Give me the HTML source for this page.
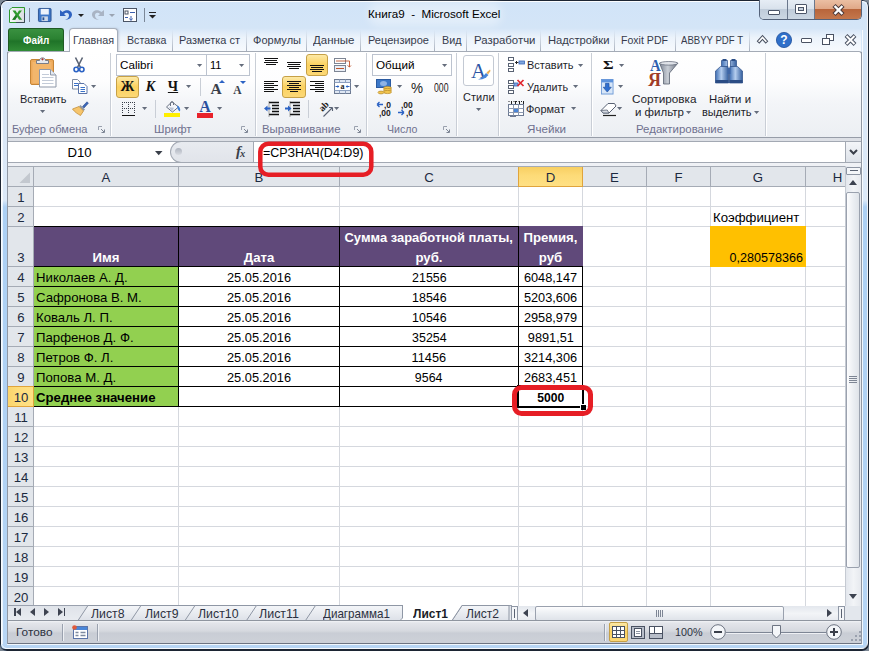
<!DOCTYPE html>
<html lang="ru"><head><meta charset="utf-8"><title>Книга9 - Microsoft Excel</title>
<style>
*{box-sizing:border-box;margin:0;padding:0}
html,body{width:869px;height:651px;overflow:hidden;background:#7d8894}
body{font-family:"Liberation Sans","DejaVu Sans",sans-serif;font-size:12px;color:#1e1e2a;position:relative}
.a{position:absolute}
.t{position:absolute;white-space:nowrap;line-height:16px;height:16px;font-size:11.5px}
.c{text-align:center}
.r{text-align:right}
.b{font-weight:bold}
#win{position:absolute;left:0;top:0;width:869px;height:651px;box-shadow:inset 1px 1px 0 0 #1c2533,inset -1.500px -2px 0 0 #1c2533;border-radius:7px 7px 7px 7px;
 background:linear-gradient(180deg,#d1e4f8 0px,#d4e5f7 28px,#dbe8f7 140px,#dce9f8 200px,#acd0f4 207px,#b2d3f4 520px,#b8d6f5 651px);overflow:hidden}
#win:before{content:"";position:absolute;left:1px;top:1px;right:1.500px;bottom:2px;border:1px solid rgba(255,255,255,.9);border-radius:6px}
.cell{position:absolute;font-size:13.2px;line-height:20px;height:20px;white-space:nowrap;color:#000}
.hd{position:absolute;font-size:13.2px;line-height:20px;height:20px;white-space:nowrap;color:#1c2a40;text-align:center}
.gl{position:absolute;font-size:11.5px;line-height:14px;height:14px;white-space:nowrap;color:#6f708f;text-align:center}
.sep{position:absolute;width:2px;top:53px;height:83px;background:linear-gradient(90deg,#c9ced6 0 1px,#fff 1px 2px)}
.arr{position:absolute;width:0;height:0;border-left:3px solid transparent;border-right:3px solid transparent;border-top:3px solid #656d7c}
.tab{position:absolute;top:32px;height:16px;line-height:16px;font-size:11.5px;color:#363b4c;white-space:nowrap}
.tsep{position:absolute;top:30px;width:1px;height:21px;background:linear-gradient(180deg,rgba(160,170,185,0),#a9b2c0)}
.hl{position:absolute;background:linear-gradient(180deg,#fde9a6,#fbd15f 50%,#fcd877);border:1px solid #c6a046;border-radius:3px}
svg{position:absolute;overflow:visible}
</style></head><body>
<div id="win">
<div class="a" style="left:375px;top:9px;width:120px;height:10px;background:rgba(255,255,255,.35);box-shadow:0 0 9px 7px rgba(255,255,255,.35);border-radius:5px"></div>
<div class="t" style="transform:scaleX(1.0124);transform-origin:0 50%;left:368.400px;top:6px;font-size:11.500px;color:#000;white-space:pre">Книга9  -  Microsoft Excel</div>
<div class="a" style="left:759px;top:0;width:103px;height:20px;border:1px solid #55637a;border-top:none;border-radius:0 0 5px 5px;overflow:hidden;background:#c6d3e2">
<div class="a" style="left:0;top:0;width:28px;height:19px;background:linear-gradient(180deg,#e6edf5 0,#d9e2ec 45%,#c0ccda 50%,#ccd7e3 100%);border-right:1px solid #6a778c"></div>
<div class="a" style="left:28px;top:0;width:27px;height:19px;background:linear-gradient(180deg,#e6edf5 0,#d9e2ec 45%,#c0ccda 50%,#ccd7e3 100%);border-right:1px solid #6a778c"></div>
<div class="a" style="left:55px;top:0;width:47px;height:19px;background:linear-gradient(180deg,#ebbfa3 0,#e0a888 45%,#b8653b 50%,#c4774c 100%)"></div>
<div class="a" style="left:8px;top:10px;width:12px;height:5px;border:1px solid #4c5568;background:#fff;border-radius:1px"></div>
<div class="a" style="left:35px;top:4px;width:12px;height:10px;border:1px solid #4c5568;background:#fff;border-radius:1px"></div>
<div class="a" style="left:38px;top:7px;width:6px;height:4px;border:1px solid #4c5568;background:#c6d0dc"></div>
<svg style="left:72px;top:4px" width="13" height="12" viewBox="0 0 13 12"><path d="M2 1.500L11 10.500M11 1.500L2 10.500" fill="none" stroke="#4b3a3a" stroke-width="4.400"/><path d="M2.600 2L10.400 10M10.400 2L2.600 10" fill="none" stroke="#fff" stroke-width="2.400"/></svg>
</div>
<svg style="left:9px;top:7px" width="16" height="16" viewBox="0 0 16 16"><defs><linearGradient id="xg" x1="0" x2="1"><stop offset="0" stop-color="#f7f8f9"/><stop offset="1" stop-color="#d9dde2"/></linearGradient></defs>
<path d="M3 .500h12.500v15H.500V3z" fill="url(#xg)" stroke="#2f9a2f"/><path d="M7 15.500h8.500V6" fill="none" stroke="#3c4a55"/>
<path d="M3.500 3.500h3L8.200 6.300 10 3.500h3L9.600 8l3.600 4.800h-3.100L8.100 9.700 6.200 12.800h-3L6.700 8z" fill="#2f9a2f"/><path d="M8.100 9.700L6.200 12.800h-3L6.700 8z" fill="#1f7a25"/></svg>
<div class="a" style="left:29px;top:8px;width:1px;height:14px;background:#7b8797"></div>
<svg style="left:37.500px;top:8px" width="13.500" height="14" viewBox="0 0 15 15" preserveAspectRatio="none"><rect x=".5" y=".5" width="14" height="14" rx="1" fill="#3f78c8" stroke="#27508f"/><rect x="3" y="1" width="9" height="6" fill="#eef3fb"/><rect x="4" y="9" width="7" height="5" fill="#cfd9e8"/><rect x="5" y="10" width="2" height="3" fill="#27508f"/></svg>
<svg style="left:59px;top:8px" width="14" height="14" viewBox="0 0 14 14"><path d="M1 2v6h6L5 6c2-2 5-1.500 5 1.500 0 2-1.500 3.500-4 4.500 5-.5 7-3 7-5.500 0-4-5.500-6-9.500-2.500z" fill="#2f63c0"/></svg>
<div class="arr" style="left:77.500px;top:14px;border-top-color:#222;border-left-width:3px;border-right-width:3px"></div>
<svg style="left:91px;top:8px" width="14" height="14" viewBox="0 0 14 14"><path d="M13 2v6H7l2-2C7 4 4 4.500 4 7.500c0 2 1.500 3.500 4 4.500-5-.5-7-3-7-5.500 0-4 5.500-6 9.500-2.500z" fill="#a9b4c4"/></svg>
<div class="arr" style="left:108.500px;top:14px;border-top-color:#9aa4b2;border-left-width:3px;border-right-width:3px"></div>
<svg style="left:123px;top:8px" width="14" height="14" viewBox="0 0 14 14"><rect x=".5" y=".5" width="13" height="13" fill="#fff" stroke="#4b5566"/><rect x="2" y="3" width="3" height="3" fill="none" stroke="#4b5566"/><path d="M7 4.500h5M2 9.500h3M8 8v4M6.500 10.500L8 12.500 9.500 10.500" stroke="#3b5fae" fill="none"/></svg>
<div class="a" style="left:144px;top:8px;width:1px;height:14px;background:#7b8797"></div>
<div class="a" style="left:149px;top:12px;width:7px;height:1px;background:#222"></div>
<svg style="left:149px;top:15px" width="7" height="3.500" viewBox="0 0 7 3.500"><path d="M0 0h7L3.500 3.500z" fill="#222"/></svg>
<div class="a" style="left:8px;top:28px;width:853px;height:24px;background:linear-gradient(180deg,rgba(255,255,255,0) 0,rgba(255,255,255,.55) 40%,rgba(250,252,254,.92) 100%)"></div>
<div class="a" style="left:8px;top:28px;width:56px;height:23px;border:1px solid #1f5a24;border-bottom:none;border-radius:3px 3px 0 0;background:linear-gradient(180deg,#3a9140 0,#2b8232 45%,#1f7328 55%,#318c36 100%)"></div>
<div class="t b" style="transform:scaleX(0.8597);transform-origin:0 50%;left:22.800px;top:32px;color:#fff;font-size:11.500px;font-weight:bold">Файл</div>
<div class="a" style="left:69px;top:28px;width:49px;height:24px;border:1px solid #a7afbb;border-bottom:none;border-radius:4px 4px 0 0;background:#fff;box-shadow:1px 0 2px rgba(120,130,150,.35)"></div>
<div class="tab" style="transform:scaleX(0.9365);transform-origin:0 50%;left:72.5px">Главная</div>
<div class="tab" style="transform:scaleX(0.9240);transform-origin:0 50%;left:126.5px">Вставка</div>
<div class="tab" style="transform:scaleX(0.9543);transform-origin:0 50%;left:179px">Разметка ст</div>
<div class="tab" style="transform:scaleX(0.9591);transform-origin:0 50%;left:252.5px">Формулы</div>
<div class="tab" style="transform:scaleX(0.9985);transform-origin:0 50%;left:313px">Данные</div>
<div class="tab" style="transform:scaleX(0.9583);transform-origin:0 50%;left:367.5px">Рецензирое</div>
<div class="tab" style="transform:scaleX(0.9369);transform-origin:0 50%;left:441.5px">Вид</div>
<div class="tab" style="transform:scaleX(0.9912);transform-origin:0 50%;left:473.5px">Разработчи</div>
<div class="tab" style="transform:scaleX(0.9745);transform-origin:0 50%;left:547.5px">Надстройки</div>
<div class="tab" style="transform:scaleX(0.9193);transform-origin:0 50%;left:621px">Foxit PDF</div>
<div class="tab" style="transform:scaleX(0.8338);transform-origin:0 50%;left:681px">ABBYY PDF T</div>
<div class="tsep" style="left:172px"></div>
<div class="tsep" style="left:246px"></div>
<div class="tsep" style="left:306px"></div>
<div class="tsep" style="left:360px"></div>
<div class="tsep" style="left:434px"></div>
<div class="tsep" style="left:466px"></div>
<div class="tsep" style="left:540px"></div>
<div class="tsep" style="left:614px"></div>
<div class="tsep" style="left:675px"></div>
<div class="tsep" style="left:749px"></div>
<svg style="left:756px;top:34px" width="13" height="11" viewBox="0 0 13 11"><path d="M2 8.500L6.500 3.500 11 8.500" fill="none" stroke="#4a5262" stroke-width="3.600" stroke-linejoin="miter"/><path d="M2.600 7.800L6.500 3.500 10.400 7.800" fill="none" stroke="#fff" stroke-width="1.600"/></svg>
<svg style="left:776px;top:32px" width="16" height="16" viewBox="0 0 16 16"><circle cx="8" cy="8" r="7.600" fill="#2f6fc9" stroke="#1e4f9c" stroke-width=".8"/><text x="8" y="12.300" text-anchor="middle" font-family="Liberation Sans,sans-serif" font-weight="bold" font-size="12" fill="#fff">?</text></svg>
<div class="a" style="left:801px;top:38px;width:11px;height:5px;border:1px solid #4a5262;background:#fff;border-radius:1px"></div>
<div class="a" style="left:826px;top:34px;width:8px;height:7px;border:1.500px solid #4a5262;background:#fff"></div>
<div class="a" style="left:822px;top:38px;width:8px;height:7px;border:1.500px solid #4a5262;background:#fff"></div>
<svg style="left:844px;top:34px" width="13" height="12" viewBox="0 0 13 12"><path d="M2 1.500L11 10.500M11 1.500L2 10.500" fill="none" stroke="#4a5262" stroke-width="4"/><path d="M2.500 2L10.500 10M10.500 2L2.500 10" fill="none" stroke="#fff" stroke-width="2"/></svg>
<div class="a" style="left:7px;top:51px;width:855px;height:87px;border:1px solid #a4abb6;border-bottom-color:#979da8;border-radius:3px 3px 0 0;background:linear-gradient(180deg,#fff 0,#fdfdfe 35%,#f3f5f8 60%,#eceff3 100%)"></div>
<div class="a" style="left:70px;top:51px;width:47px;height:1px;background:#fff"></div>
<div class="a" style="left:8px;top:138px;width:853px;height:3px;background:#dde0e6"></div>
<div class="sep" style="left:110px"></div>
<div class="sep" style="left:255px"></div>
<div class="sep" style="left:366px"></div>
<div class="sep" style="left:455.5px"></div>
<div class="sep" style="left:498px"></div>
<div class="sep" style="left:591px"></div>
<div class="sep" style="left:765px"></div>
<div class="gl" style="transform:scaleX(0.9660);transform-origin:0 50%;left:11.5px;top:122px;text-align:left">Буфер обмена</div>
<div class="gl" style="transform:scaleX(0.9909);transform-origin:0 50%;left:154px;top:122px;text-align:left">Шрифт</div>
<div class="gl" style="transform:scaleX(0.9915);transform-origin:0 50%;left:262px;top:122px;text-align:left">Выравнивание</div>
<div class="gl" style="transform:scaleX(0.9221);transform-origin:0 50%;left:387px;top:122px;text-align:left">Число</div>
<div class="gl" style="transform:scaleX(1.0109);transform-origin:0 50%;left:526.5px;top:122px;text-align:left">Ячейки</div>
<div class="gl" style="transform:scaleX(0.9930);transform-origin:0 50%;left:636px;top:122px;text-align:left">Редактирование</div>
<svg style="left:98px;top:126px" width="7" height="7" viewBox="0 0 7 7"><path d="M.500 4V.500H4" fill="none" stroke="#9aa1ae"/><path d="M3 3l3 3M6.500 3.500v3H3.500" fill="none" stroke="#7d8594"/></svg>
<svg style="left:241px;top:126px" width="7" height="7" viewBox="0 0 7 7"><path d="M.500 4V.500H4" fill="none" stroke="#9aa1ae"/><path d="M3 3l3 3M6.500 3.500v3H3.500" fill="none" stroke="#7d8594"/></svg>
<svg style="left:354px;top:126px" width="7" height="7" viewBox="0 0 7 7"><path d="M.500 4V.500H4" fill="none" stroke="#9aa1ae"/><path d="M3 3l3 3M6.500 3.500v3H3.500" fill="none" stroke="#7d8594"/></svg>
<svg style="left:443px;top:126px" width="7" height="7" viewBox="0 0 7 7"><path d="M.500 4V.500H4" fill="none" stroke="#9aa1ae"/><path d="M3 3l3 3M6.500 3.500v3H3.500" fill="none" stroke="#7d8594"/></svg>
<svg style="left:29px;top:56px" width="28" height="32" viewBox="0 0 28 32">
<rect x="1.500" y="3.500" width="23" height="25" rx="1.500" fill="#eeaa5a" stroke="#c58537"/>
<rect x="3.500" y="6" width="19" height="21" fill="#f6c07c" opacity=".55"/>
<path d="M7.500 7.500V4.500h3c0-3.500 6-3.500 6 0h3v3z" fill="#e6e9ee" stroke="#6d7482" stroke-width=".9"/>
<circle cx="13.500" cy="3.300" r="1.100" fill="#a33"/>
<path d="M10.500 13.500h11l5.500 5.500v12h-16.500z" fill="#fff" stroke="#8d97a8"/>
<path d="M21.500 13.500v5.500h5.500" fill="#e4e9f1" stroke="#8d97a8"/>
<path d="M13 18.500h7M13 21.500h11.500M13 24.500h11.500M13 27.500h11.500" stroke="#c3cbd8"/>
</svg>
<div class="t" style="transform:scaleX(0.9538);transform-origin:0 50%;left:19.5px;top:91px;">Вставить</div>
<svg style="left:39.9px;top:109.5px" width="5.200" height="3" viewBox="0 0 5.200 3"><path d="M0 0h5.200L2.600 3z" fill="#656d7c"/></svg>
<svg style="left:73px;top:57px" width="12" height="16" viewBox="0 0 12 16">
<path d="M2.500 .500L7.500 10.500M9.500 .500L4.500 10.500" stroke="#596273" stroke-width="1.600" fill="none"/>
<circle cx="3.200" cy="12.500" r="2.200" fill="#fff" stroke="#2b62c4" stroke-width="1.600"/>
<circle cx="8.800" cy="12.500" r="2.200" fill="#fff" stroke="#2b62c4" stroke-width="1.600"/></svg>
<svg style="left:72px;top:79px" width="16" height="15" viewBox="0 0 16 15">
<path d="M.500 .500h5l2.500 2.500v7H.500z" fill="#fff" stroke="#7d8aa0"/><path d="M2 4.500h4M2 6.500h4" stroke="#3b72c8"/>
<path d="M6.500 4.500h5.500l3 3v7H6.500z" fill="#fff" stroke="#5b74a8"/><path d="M8.500 8.500h4.500M8.500 10.500h4.500M8.500 12.500h4.500" stroke="#3b72c8"/></svg>
<svg style="left:91.4px;top:84.5px" width="5.200" height="3" viewBox="0 0 5.200 3"><path d="M0 0h5.200L2.600 3z" fill="#656d7c"/></svg>
<svg style="left:72px;top:101px" width="17" height="15" viewBox="0 0 17 15">
<path d="M10.500 5.500L15 .800l1.400 1.400-4.400 4.800z" fill="#3a66b8" stroke="#2a4a8c" stroke-width=".6"/>
<path d="M8.500 4L13 8.500l-1.500 1.500L7 5.500z" fill="#8d95a3"/>
<path d="M7 5.500l4.500 4.500-3 4.500C6 13 3 11.500 .500 8z" fill="#f6c56c" stroke="#c48f3a" stroke-width=".8"/></svg>
<div class="a" style="left:116px;top:54px;width:91px;height:22px;background:#fff;border:1px solid #bcc3cf"></div>
<div class="a" style="left:206px;top:54px;width:44px;height:22px;background:#fff;border:1px solid #bcc3cf"></div>
<div class="t" style="transform:scaleX(1.0125);transform-origin:0 50%;left:119.5px;top:57px;color:#000">Calibri</div>
<svg style="left:196.9px;top:63.5px" width="5.200" height="3" viewBox="0 0 5.200 3"><path d="M0 0h5.200L2.600 3z" fill="#656d7c"/></svg>
<div class="t" style="transform:scaleX(0.9621);transform-origin:0 50%;left:210px;top:57px;color:#000">11</div>
<svg style="left:239.4px;top:63.5px" width="5.200" height="3" viewBox="0 0 5.200 3"><path d="M0 0h5.200L2.600 3z" fill="#656d7c"/></svg>
<div class="hl" style="left:116px;top:76px;width:23px;height:22px"></div>
<div class="t c" style="left:116px;top:79px;width:23px;font-family:'Liberation Serif',serif;font-weight:bold;color:#111;font-size:14px">Ж</div>
<div class="t c" style="left:139px;top:79px;width:23px;font-family:'Liberation Serif',serif;font-weight:bold;color:#111;font-size:14px;font-style:italic">К</div>
<div class="t c" style="left:162px;top:78.500px;width:22px;font-family:'Liberation Serif',serif;font-weight:bold;color:#111;font-size:14px;text-decoration:underline">Ч</div>
<svg style="left:186.4px;top:85.0px" width="5.200" height="3" viewBox="0 0 5.200 3"><path d="M0 0h5.200L2.600 3z" fill="#656d7c"/></svg>
<div class="a" style="left:200px;top:78px;width:1px;height:18px;background:#c9ced6"></div>
<div class="t c" style="left:207px;top:80.500px;width:18px;font-family:'Liberation Serif',serif;font-weight:bold;color:#111;font-size:15.500px;color:#3a3f4a">A</div>
<div class="a" style="left:219px;top:80px;width:0;height:0;border-left:3px solid transparent;border-right:3px solid transparent;border-bottom:3px solid #2b62c4"></div>
<div class="t c" style="left:231px;top:82px;width:13px;font-family:'Liberation Serif',serif;font-weight:bold;color:#111;font-size:11.500px;color:#3a3f4a">A</div>
<div class="a" style="left:240px;top:81px;width:0;height:0;border-left:3px solid transparent;border-right:3px solid transparent;border-top:3px solid #2b62c4"></div>
<svg style="left:122px;top:102px" width="14" height="15" viewBox="0 0 14 15" shape-rendering="crispEdges"><path d="M.500 0v12M6.500 0v12M12.500 0v12M0 .500h13M0 6.500h13" fill="none" stroke="#3a3f4a" stroke-dasharray="1 1"/><path d="M0 13.500h13" stroke="#111" stroke-width="1"/></svg>
<svg style="left:141.9px;top:106.5px" width="5.200" height="3" viewBox="0 0 5.200 3"><path d="M0 0h5.200L2.600 3z" fill="#656d7c"/></svg>
<div class="a" style="left:155px;top:100px;width:1px;height:18px;background:#c9ced6"></div>
<svg style="left:164px;top:100px" width="17" height="18" viewBox="0 0 17 18">
<path d="M2.500 7L8 1.800l6.500 5.200-6 5z" fill="#f4f6fa" stroke="#5b6577" stroke-width=".9"/>
<path d="M6.500 6V3.200c0-2 3-2 3 0V5" fill="none" stroke="#5b6577" stroke-width=".9"/>
<path d="M4.500 7.200L10 7.800 8.300 11z" fill="#b9c4d6"/>
<path d="M13 5.500c2.500.8 3.800 3 3 6-1.800-.8-2.600-2.600-3-6z" fill="#3f7fd6"/>
<rect x="0" y="13" width="16" height="4" fill="#ffef00"/></svg>
<svg style="left:184.4px;top:106.5px" width="5.200" height="3" viewBox="0 0 5.200 3"><path d="M0 0h5.200L2.600 3z" fill="#656d7c"/></svg>
<div class="t c" style="left:197px;top:99px;width:16px;font-family:'Liberation Serif',serif;font-weight:bold;color:#111;font-size:16px;color:#2a4f9e">A</div>
<div class="a" style="left:197px;top:113px;width:16px;height:4.500px;background:#e8222b"></div>
<svg style="left:217.4px;top:106.5px" width="5.200" height="3" viewBox="0 0 5.200 3"><path d="M0 0h5.200L2.600 3z" fill="#656d7c"/></svg>
<svg style="left:264px;top:58px" width="15" height="8" viewBox="0 0 15 8" shape-rendering="crispEdges"><rect x="0" y="0" width="14" height="1" fill="#111"/><rect x="1" y="2" width="12" height="1" fill="#111"/><rect x="0" y="4" width="14" height="1" fill="#111"/><rect x="2" y="6" width="10" height="1" fill="#111"/></svg>
<svg style="left:287px;top:62px" width="15" height="8" viewBox="0 0 15 8" shape-rendering="crispEdges"><rect x="0" y="0" width="14" height="1" fill="#111"/><rect x="1" y="2" width="12" height="1" fill="#111"/><rect x="0" y="4" width="14" height="1" fill="#111"/><rect x="2" y="6" width="10" height="1" fill="#111"/></svg>
<div class="hl" style="left:306px;top:54px;width:22px;height:22px"></div>
<svg style="left:310px;top:65px" width="15" height="8" viewBox="0 0 15 8" shape-rendering="crispEdges"><rect x="0" y="0" width="14" height="1" fill="#111"/><rect x="1" y="2" width="12" height="1" fill="#111"/><rect x="0" y="4" width="14" height="1" fill="#111"/><rect x="2" y="6" width="10" height="1" fill="#111"/></svg>
<svg style="left:334px;top:57px" width="17" height="16" viewBox="0 0 17 16"><rect x=".500" y="1.500" width="11" height="5" fill="#fff" stroke="#7d8594"/><path d="M2 4h13.500v6l-2-1.500M15.500 10l1.500-1.500" fill="none" stroke="#c0552c" stroke-width=".9"/><rect x=".500" y="8.500" width="11" height="6" fill="#e9eef6" stroke="#7d8594"/><path d="M2 11.500h8" stroke="#c0552c"/></svg>
<svg style="left:264px;top:81px" width="15" height="12" viewBox="0 0 15 12" shape-rendering="crispEdges"><rect x="0" y="0" width="14" height="1" fill="#111"/><rect x="0" y="2" width="10" height="1" fill="#111"/><rect x="0" y="4" width="14" height="1" fill="#111"/><rect x="0" y="6" width="10" height="1" fill="#111"/><rect x="0" y="8" width="14" height="1" fill="#111"/><rect x="0" y="10" width="10" height="1" fill="#111"/></svg>
<div class="hl" style="left:282px;top:76px;width:24px;height:22px"></div>
<svg style="left:287px;top:81px" width="15" height="12" viewBox="0 0 15 12" shape-rendering="crispEdges"><rect x="0" y="0" width="14" height="1" fill="#111"/><rect x="2" y="2" width="10" height="1" fill="#111"/><rect x="0" y="4" width="14" height="1" fill="#111"/><rect x="2" y="6" width="10" height="1" fill="#111"/><rect x="0" y="8" width="14" height="1" fill="#111"/><rect x="3" y="10" width="8" height="1" fill="#111"/></svg>
<svg style="left:310px;top:81px" width="15" height="12" viewBox="0 0 15 12" shape-rendering="crispEdges"><rect x="0" y="0" width="14" height="1" fill="#111"/><rect x="5" y="2" width="9" height="1" fill="#111"/><rect x="0" y="4" width="14" height="1" fill="#111"/><rect x="5" y="6" width="9" height="1" fill="#111"/><rect x="0" y="8" width="14" height="1" fill="#111"/><rect x="5" y="10" width="9" height="1" fill="#111"/></svg>
<svg style="left:334px;top:79px" width="17" height="15" viewBox="0 0 17 15"><rect x=".500" y=".500" width="16" height="14" fill="#dfe7f3" stroke="#6d7a92"/><path d="M.500 3.500h16M.500 11.500h16M5.500 .500v3M11.500 .500v3M5.500 11.500v3M11.500 11.500v3" stroke="#8da0c0"/><rect x="1" y="4" width="15" height="7" fill="#fff"/><text x="8.500" y="10" text-anchor="middle" font-family="Liberation Serif,serif" font-weight="bold" font-size="8" fill="#222">a</text><path d="M1.500 7.500h3.500M12 7.500h3.500" stroke="#2b62c4"/><path d="M3.500 6l1.800 1.500-1.800 1.500zM13.500 6l-1.800 1.500 1.800 1.500z" fill="#2b62c4"/></svg>
<svg style="left:354.4px;top:85.0px" width="5.200" height="3" viewBox="0 0 5.200 3"><path d="M0 0h5.200L2.600 3z" fill="#656d7c"/></svg>
<svg style="left:264px;top:101px" width="16" height="16" viewBox="0 0 16 16"><path d="M5 1.500h10M8 4.500h7M8 7.500h7M8 10.500h7M5 13.500h10" stroke="#111" stroke-width="1.300"/><path d="M5 .5v15" stroke="#555" stroke-dasharray="1 1"/><path d="M0 7.500l3.500-3v2h3v2h-3v2z" fill="#2b62c4"/></svg>
<svg style="left:285px;top:101px" width="16" height="16" viewBox="0 0 16 16"><path d="M5 1.500h10M8 4.500h7M8 7.500h7M8 10.500h7M5 13.500h10" stroke="#111" stroke-width="1.300"/><path d="M5 .5v15" stroke="#555" stroke-dasharray="1 1"/><path d="M6.500 7.500l-3.500-3v2h-3v2h3v2z" fill="#2b62c4"/></svg>
<div class="a" style="left:308px;top:100px;width:1px;height:18px;background:#c9ced6"></div>
<svg style="left:317px;top:100px" width="18" height="18" viewBox="0 0 18 18"><text transform="translate(5.500,12) rotate(-45)" font-family="Liberation Serif,serif" font-size="9.500" font-weight="bold" fill="#222">ab</text><path d="M6.500 16.500L15.500 7.500M15.500 7.500h-3.500M15.500 7.500v3.500" stroke="#596273" stroke-width="1.100" fill="none"/></svg>
<svg style="left:334.4px;top:106.5px" width="5.200" height="3" viewBox="0 0 5.200 3"><path d="M0 0h5.200L2.600 3z" fill="#656d7c"/></svg>
<div class="a" style="left:372px;top:54px;width:80px;height:22px;background:#fff;border:1px solid #bcc3cf"></div>
<div class="t" style="transform:scaleX(1.0173);transform-origin:0 50%;left:376px;top:57px;color:#000">Общий</div>
<svg style="left:441.9px;top:63.5px" width="5.200" height="3" viewBox="0 0 5.200 3"><path d="M0 0h5.200L2.600 3z" fill="#656d7c"/></svg>
<svg style="left:376px;top:79px" width="17" height="16" viewBox="0 0 17 16"><rect x=".500" y=".500" width="14" height="8" fill="#3c78c8" stroke="#2a5aa0"/><ellipse cx="7.500" cy="4.500" rx="3.500" ry="2.500" fill="#8fb4e6"/><ellipse cx="11.500" cy="9" rx="4" ry="1.600" fill="#f3c64e" stroke="#b8892a" stroke-width=".7"/><ellipse cx="11.500" cy="11" rx="4" ry="1.600" fill="#f3c64e" stroke="#b8892a" stroke-width=".7"/><ellipse cx="11.500" cy="13" rx="4" ry="1.600" fill="#f3c64e" stroke="#b8892a" stroke-width=".7"/><ellipse cx="5" cy="13.500" rx="3" ry="1.400" fill="#f3c64e" stroke="#b8892a" stroke-width=".7"/></svg>
<svg style="left:396.9px;top:85.0px" width="5.200" height="3" viewBox="0 0 5.200 3"><path d="M0 0h5.200L2.600 3z" fill="#656d7c"/></svg>
<div class="t" style="transform:scaleX(0.9636);transform-origin:0 50%;left:411px;top:80px;font-size:14px;color:#222">%</div>
<div class="t" style="transform:scaleX(0.6951);transform-origin:0 50%;left:433.5px;top:80px;font-size:12.500px;color:#2a1a1a">000</div>
<svg style="left:377px;top:101px" width="17" height="16" viewBox="0 0 17 16"><path d="M0 3.500h6M0 3.500l2.500-2.500M0 3.500l2.500 2.500" stroke="#2b62c4" stroke-width="1.300" fill="none"/><text x="7" y="7" font-family="Liberation Sans,sans-serif" font-weight="bold" font-size="8.500" fill="#222">,0</text><text x="2" y="15" font-family="Liberation Sans,sans-serif" font-weight="bold" font-size="8.500" fill="#222">,00</text></svg>
<svg style="left:398px;top:101px" width="17" height="16" viewBox="0 0 17 16"><text x="3" y="7" font-family="Liberation Sans,sans-serif" font-weight="bold" font-size="8.500" fill="#222">,00</text><path d="M0 11.500h6M6 11.500l-2.500-2.500M6 11.500l-2.500 2.500" stroke="#2b62c4" stroke-width="1.300" fill="none"/><text x="8" y="15" font-family="Liberation Sans,sans-serif" font-weight="bold" font-size="8.500" fill="#222">,0</text></svg>
<div class="a" style="left:463px;top:55px;width:31px;height:31px;background:#fff;border:1px solid #c3c9d3;border-radius:3px"></div>
<div class="t c" style="left:467.500px;top:58.500px;width:22px;height:24px;line-height:24px;font-family:'Liberation Serif',serif;font-size:21px;color:#2b55a4">A</div>
<svg style="left:478px;top:69px" width="13" height="12" viewBox="0 0 13 12"><path d="M0 10.500C4 9 6 6 8 4l2.500 2C8 9 5 11 0 10.500z" fill="#4a86d8"/><path d="M8.500 3.500L12 .500l.5 1.500-2.500 3.500z" fill="#f0b050"/></svg>
<div class="t" style="transform:scaleX(0.9505);transform-origin:0 50%;left:462.5px;top:89.4px;">Стили</div>
<svg style="left:475.9px;top:107.5px" width="5.200" height="3" viewBox="0 0 5.200 3"><path d="M0 0h5.200L2.600 3z" fill="#656d7c"/></svg>
<svg style="left:508px;top:57px" width="17" height="16" viewBox="0 0 17 16"><rect x=".500" y=".500" width="5" height="3" fill="#fff" stroke="#596273"/><rect x=".500" y="6.500" width="5" height="3" fill="#fff" stroke="#596273"/><rect x=".500" y="11.500" width="5" height="3" fill="#fff" stroke="#596273"/><path d="M7.500 5.500h3M7.500 5.500l1.500-1.500M7.500 5.500l1.500 1.500" stroke="#222" fill="none"/><rect x="11" y="4" width="5.500" height="3" fill="#7fa6de" stroke="#3a66b8" stroke-width=".8"/></svg>
<div class="t" style="transform:scaleX(0.9538);transform-origin:0 50%;left:527px;top:57px;">Вставить</div>
<svg style="left:578.4px;top:63.5px" width="5.200" height="3" viewBox="0 0 5.200 3"><path d="M0 0h5.200L2.600 3z" fill="#656d7c"/></svg>
<svg style="left:508px;top:79px" width="17" height="16" viewBox="0 0 17 16"><rect x=".500" y="1.500" width="5" height="3" fill="#fff" stroke="#596273"/><rect x=".500" y="6.500" width="5" height="3" fill="#fff" stroke="#596273"/><rect x=".500" y="11.500" width="5" height="3" fill="#fff" stroke="#596273"/><rect x="6" y="4" width="4" height="3" fill="#7fa6de" stroke="#3a66b8" stroke-width=".8"/><path d="M9.500 1l6 6M15.500 1l-6 6" stroke="#e0262e" stroke-width="1.700"/></svg>
<div class="t" style="transform:scaleX(0.9338);transform-origin:0 50%;left:527px;top:79px;">Удалить</div>
<svg style="left:573.4px;top:85.0px" width="5.200" height="3" viewBox="0 0 5.200 3"><path d="M0 0h5.200L2.600 3z" fill="#656d7c"/></svg>
<svg style="left:508px;top:101px" width="17" height="16" viewBox="0 0 17 16"><path d="M.500 .500h15.500" stroke="#222" stroke-dasharray="1 1.500"/><path d="M3.500 0v3M7.500 0v3M11.500 0v3M15.500 0v3" stroke="#222"/><rect x=".500" y="3.500" width="15" height="11" fill="#fff" stroke="#6d7a92"/><path d="M.500 7.500h15M.500 11.500h15M5.500 3.500v11M10.500 3.500v11" stroke="#8d9ab2"/><rect x="6" y="8" width="4" height="3" fill="#4a86d8"/><path d="M2 15.500h6" stroke="#6d7a92"/></svg>
<div class="t" style="transform:scaleX(0.9545);transform-origin:0 50%;left:526.3px;top:101px;">Формат</div>
<svg style="left:570.9px;top:106.5px" width="5.200" height="3" viewBox="0 0 5.200 3"><path d="M0 0h5.200L2.600 3z" fill="#656d7c"/></svg>
<div class="t" style="left:602.800px;top:56px;font-family:'Liberation Serif',serif;font-weight:bold;font-size:12px;color:#111;line-height:18px;height:18px;transform:scaleX(1.35);transform-origin:0 50%">Σ</div>
<svg style="left:619.4px;top:63.5px" width="5.200" height="3" viewBox="0 0 5.200 3"><path d="M0 0h5.200L2.600 3z" fill="#656d7c"/></svg>
<svg style="left:601px;top:79px" width="12.500" height="15.500" viewBox="0 0 14 16" preserveAspectRatio="none"><rect x=".500" y=".500" width="13" height="15" fill="#d7e6f8" stroke="#6f9ad6"/><rect x=".500" y=".500" width="13" height="3" fill="#5d93dd"/><path d="M5 4.500h4v4h2.500L7 13.500 2.500 8.500H5z" fill="#2f6fd0" stroke="#1f4f9c" stroke-width=".7"/></svg>
<svg style="left:617.9px;top:85.0px" width="5.200" height="3" viewBox="0 0 5.200 3"><path d="M0 0h5.200L2.600 3z" fill="#656d7c"/></svg>
<svg style="left:600px;top:102px" width="17" height="14" viewBox="0 0 17 14"><path d="M1 8.500L8 1.500h6.500l1.500 2.500-7 7H3z" fill="#fff" stroke="#596273"/><path d="M1 8.500L3 11h6l-1.800-3z" fill="#d5dae2" stroke="#596273" stroke-width=".8"/><path d="M3 13.500h13" stroke="#222" stroke-width="1.200"/></svg>
<svg style="left:617.4px;top:106.5px" width="5.200" height="3" viewBox="0 0 5.200 3"><path d="M0 0h5.200L2.600 3z" fill="#656d7c"/></svg>
<svg style="left:647px;top:56px" width="33" height="31" viewBox="0 0 33 31"><defs><linearGradient id="fn" x1="0" x2="1"><stop offset="0" stop-color="#7d8594"/><stop offset=".45" stop-color="#c9ced6"/><stop offset="1" stop-color="#6d7482"/></linearGradient></defs><text transform="translate(3,14.500) scale(.85,1)" font-family="Liberation Serif,serif" font-weight="bold" font-size="17.500" fill="#2d5fb0">A</text><text x="1" y="30" font-family="Liberation Serif,serif" font-weight="bold" font-size="18" fill="#a03c28">Я</text><path d="M12.500 7h18.500l-8.500 10v11h-6V17z" fill="url(#fn)" stroke="#5b6372" stroke-width=".8"/><ellipse cx="21.700" cy="7.300" rx="9" ry="1.800" fill="#dfe2e8" stroke="#5b6372" stroke-width=".7"/></svg>
<div class="t" style="transform:scaleX(1.0218);transform-origin:0 50%;left:631.5px;top:91px;">Сортировка</div>
<div class="t" style="transform:scaleX(1.0003);transform-origin:0 50%;left:635px;top:104px;">и фильтр</div>
<svg style="left:686.4px;top:110.5px" width="5.200" height="3" viewBox="0 0 5.200 3"><path d="M0 0h5.200L2.600 3z" fill="#656d7c"/></svg>
<svg style="left:715px;top:59px" width="28" height="26" viewBox="0 0 28 26"><defs><linearGradient id="bn" x1="0" x2="1"><stop offset="0" stop-color="#3f6fb4"/><stop offset=".45" stop-color="#b4cdee"/><stop offset="1" stop-color="#345f9f"/></linearGradient></defs><path d="M6.500 1.500h6v6h-6zM15.500 1.500h6v6h-6z" fill="url(#bn)" stroke="#2c4f88" stroke-width=".7"/><path d="M7.500 0h4v2h-4zM16.500 0h4v2h-4z" fill="#2c4f88"/><path d="M5.500 7.500h7.500l.5 4v12.500H.500V12z" fill="url(#bn)" stroke="#2c4f88" stroke-width=".7"/><path d="M15 7.500h7.500l5 4.500v12H14.500V11.500z" fill="url(#bn)" stroke="#2c4f88" stroke-width=".7"/><rect x="12.500" y="9" width="3" height="6" fill="#3f66a6"/><rect x=".500" y="21" width="13" height="3" fill="#2a4c84"/><rect x="14.500" y="21" width="13" height="3" fill="#2a4c84"/></svg>
<div class="t" style="transform:scaleX(0.9897);transform-origin:0 50%;left:708.5px;top:91px;">Найти и</div>
<div class="t" style="transform:scaleX(0.9612);transform-origin:0 50%;left:701.5px;top:104px;">выделить</div>
<svg style="left:754.4px;top:110.5px" width="5.200" height="3" viewBox="0 0 5.200 3"><path d="M0 0h5.200L2.600 3z" fill="#656d7c"/></svg>
<div class="a" style="left:8px;top:141px;width:853px;height:22px;background:#dfe3e9;border-top:1px solid #a3a9b3;border-bottom:1px solid #a3a9b3"></div>
<div class="a" style="left:8px;top:163px;width:853px;height:3px;background:#eff1f5"></div>
<div class="a" style="left:8px;top:141px;width:175px;height:22px;background:#fff;border:1px solid #a3a9b3;border-left:none;border-right:none"></div>
<div class="cell c" style="left:8px;top:144px;width:143px;line-height:18px;height:18px">D10</div>
<svg style="left:155.300px;top:151px" width="7.500" height="4.200" viewBox="0 0 7.500 4.200"><path d="M0 0h7.500L3.750 4.200z" fill="#3a3f4a"/></svg>
<div class="a" style="left:170px;top:141px;width:84px;height:22px;border:1px solid #a3a9b3;border-right:none;border-radius:11px 0 0 11px;background:linear-gradient(180deg,#e8ebf0,#e1e4ea)"></div>
<div class="a" style="left:175px;top:147.500px;width:6.500px;height:7px;border-radius:3.500px;background:linear-gradient(180deg,#aeb4bf,#d9dce2)"></div>
<div class="t" style="left:236px;top:143px;font-family:'Liberation Serif',serif;font-style:italic;font-weight:bold;font-size:15px;color:#3a3f4a">f<span style="font-size:10.500px;position:relative;top:1px;margin-left:-1px">x</span></div>
<div class="a" style="left:253px;top:141px;width:593px;height:22px;background:#fff;border:1px solid #a3a9b3"></div>
<div class="cell" style="transform:scaleX(0.9487);transform-origin:0 50%;left:263px;top:144px;line-height:18px;height:18px">=СРЗНАЧ(D4:D9)</div>
<div class="a" style="left:846px;top:141px;width:15px;height:22px;background:linear-gradient(180deg,#f3f5f8,#dde2e9);border:1px solid #a3a9b3;border-left:none;border-right:none"></div>
<svg style="left:849px;top:149px" width="9" height="7" viewBox="0 0 9 7"><path d="M1 1l3.500 3.500L8 1" fill="none" stroke="#3a3f4a" stroke-width="2"/></svg>
<div class="a" style="left:8px;top:166px;width:837px;height:440px;background:#fff"></div>
<div class="a" style="left:8px;top:166px;width:837px;height:21px;background:#e2e6eb;border-top:1px solid #a5abb5;border-bottom:1px solid #a5abb5"></div>
<div class="a" style="left:8px;top:187px;width:26px;height:419px;background:#e2e6eb;border-right:1px solid #a5abb5"></div>
<svg style="left:19px;top:172px" width="12" height="12" viewBox="0 0 12 12"><path d="M11 0.500V11H0.500z" fill="#c3c8cf"/></svg>
<div class="a" style="left:33px;top:167px;width:1px;height:19px;background:#a5abb5"></div>
<div class="a" style="left:178px;top:167px;width:1px;height:19px;background:#a5abb5"></div>
<div class="a" style="left:339px;top:167px;width:1px;height:19px;background:#a5abb5"></div>
<div class="a" style="left:518px;top:167px;width:1px;height:19px;background:#a5abb5"></div>
<div class="a" style="left:582px;top:167px;width:1px;height:19px;background:#a5abb5"></div>
<div class="a" style="left:646px;top:167px;width:1px;height:19px;background:#a5abb5"></div>
<div class="a" style="left:710px;top:167px;width:1px;height:19px;background:#a5abb5"></div>
<div class="a" style="left:805px;top:167px;width:1px;height:19px;background:#a5abb5"></div>
<div class="a" style="left:8px;top:206px;width:25px;height:1px;background:#a5abb5"></div>
<div class="a" style="left:8px;top:226px;width:25px;height:1px;background:#a5abb5"></div>
<div class="a" style="left:8px;top:266px;width:25px;height:1px;background:#a5abb5"></div>
<div class="a" style="left:8px;top:286px;width:25px;height:1px;background:#a5abb5"></div>
<div class="a" style="left:8px;top:306px;width:25px;height:1px;background:#a5abb5"></div>
<div class="a" style="left:8px;top:326px;width:25px;height:1px;background:#a5abb5"></div>
<div class="a" style="left:8px;top:346px;width:25px;height:1px;background:#a5abb5"></div>
<div class="a" style="left:8px;top:366px;width:25px;height:1px;background:#a5abb5"></div>
<div class="a" style="left:8px;top:386px;width:25px;height:1px;background:#a5abb5"></div>
<div class="a" style="left:8px;top:406px;width:25px;height:1px;background:#a5abb5"></div>
<div class="a" style="left:8px;top:426px;width:25px;height:1px;background:#a5abb5"></div>
<div class="a" style="left:8px;top:446px;width:25px;height:1px;background:#a5abb5"></div>
<div class="a" style="left:8px;top:466px;width:25px;height:1px;background:#a5abb5"></div>
<div class="a" style="left:8px;top:486px;width:25px;height:1px;background:#a5abb5"></div>
<div class="a" style="left:8px;top:506px;width:25px;height:1px;background:#a5abb5"></div>
<div class="a" style="left:8px;top:526px;width:25px;height:1px;background:#a5abb5"></div>
<div class="a" style="left:8px;top:546px;width:25px;height:1px;background:#a5abb5"></div>
<div class="a" style="left:8px;top:566px;width:25px;height:1px;background:#a5abb5"></div>
<div class="a" style="left:8px;top:586px;width:25px;height:1px;background:#a5abb5"></div>
<div class="a" style="left:8px;top:606px;width:25px;height:1px;background:#a5abb5"></div>
<div class="a" style="left:518px;top:167px;width:65px;height:20px;background:linear-gradient(180deg,#f8cf62,#fddb78 45%,#ffe084);border:1px solid #e0a43c;border-top:none"></div>
<div class="a" style="left:8px;top:386px;width:26px;height:21px;background:linear-gradient(90deg,#fbd56c,#fedd7c 45%,#ffe084);border:1px solid #e0a43c;border-left:none"></div>
<div class="a" style="left:178px;top:187px;width:1px;height:419px;background:#d5d8de"></div>
<div class="a" style="left:339px;top:187px;width:1px;height:419px;background:#d5d8de"></div>
<div class="a" style="left:518px;top:187px;width:1px;height:419px;background:#d5d8de"></div>
<div class="a" style="left:582px;top:187px;width:1px;height:419px;background:#d5d8de"></div>
<div class="a" style="left:646px;top:187px;width:1px;height:419px;background:#d5d8de"></div>
<div class="a" style="left:710px;top:187px;width:1px;height:419px;background:#d5d8de"></div>
<div class="a" style="left:805px;top:187px;width:1px;height:419px;background:#d5d8de"></div>
<div class="a" style="left:34px;top:206px;width:811px;height:1px;background:#d5d8de"></div>
<div class="a" style="left:34px;top:226px;width:811px;height:1px;background:#d5d8de"></div>
<div class="a" style="left:34px;top:266px;width:811px;height:1px;background:#d5d8de"></div>
<div class="a" style="left:34px;top:286px;width:811px;height:1px;background:#d5d8de"></div>
<div class="a" style="left:34px;top:306px;width:811px;height:1px;background:#d5d8de"></div>
<div class="a" style="left:34px;top:326px;width:811px;height:1px;background:#d5d8de"></div>
<div class="a" style="left:34px;top:346px;width:811px;height:1px;background:#d5d8de"></div>
<div class="a" style="left:34px;top:366px;width:811px;height:1px;background:#d5d8de"></div>
<div class="a" style="left:34px;top:386px;width:811px;height:1px;background:#d5d8de"></div>
<div class="a" style="left:34px;top:406px;width:811px;height:1px;background:#d5d8de"></div>
<div class="a" style="left:34px;top:426px;width:811px;height:1px;background:#d5d8de"></div>
<div class="a" style="left:34px;top:446px;width:811px;height:1px;background:#d5d8de"></div>
<div class="a" style="left:34px;top:466px;width:811px;height:1px;background:#d5d8de"></div>
<div class="a" style="left:34px;top:486px;width:811px;height:1px;background:#d5d8de"></div>
<div class="a" style="left:34px;top:506px;width:811px;height:1px;background:#d5d8de"></div>
<div class="a" style="left:34px;top:526px;width:811px;height:1px;background:#d5d8de"></div>
<div class="a" style="left:34px;top:546px;width:811px;height:1px;background:#d5d8de"></div>
<div class="a" style="left:34px;top:566px;width:811px;height:1px;background:#d5d8de"></div>
<div class="a" style="left:34px;top:586px;width:811px;height:1px;background:#d5d8de"></div>
<div class="hd" style="left:33px;top:168px;width:146px">A</div>
<div class="hd" style="left:178px;top:168px;width:162px">B</div>
<div class="hd" style="left:339px;top:168px;width:180px">C</div>
<div class="hd" style="left:518px;top:168px;width:65px">D</div>
<div class="hd" style="left:582px;top:168px;width:65px">E</div>
<div class="hd" style="left:646px;top:168px;width:65px">F</div>
<div class="hd" style="left:710px;top:168px;width:96px">G</div>
<div class="hd" style="left:805px;top:168px;width:65px">H</div>
<div class="hd" style="left:8px;top:188px;width:26px">1</div>
<div class="hd" style="left:8px;top:208px;width:26px">2</div>
<div class="hd" style="left:8px;top:248px;width:26px">3</div>
<div class="hd" style="left:8px;top:268px;width:26px">4</div>
<div class="hd" style="left:8px;top:288px;width:26px">5</div>
<div class="hd" style="left:8px;top:308px;width:26px">6</div>
<div class="hd" style="left:8px;top:328px;width:26px">7</div>
<div class="hd" style="left:8px;top:348px;width:26px">8</div>
<div class="hd" style="left:8px;top:368px;width:26px">9</div>
<div class="hd" style="left:8px;top:388px;width:26px">10</div>
<div class="hd" style="left:8px;top:408px;width:26px">11</div>
<div class="hd" style="left:8px;top:428px;width:26px">12</div>
<div class="hd" style="left:8px;top:448px;width:26px">13</div>
<div class="hd" style="left:8px;top:468px;width:26px">14</div>
<div class="hd" style="left:8px;top:488px;width:26px">15</div>
<div class="hd" style="left:8px;top:508px;width:26px">16</div>
<div class="hd" style="left:8px;top:528px;width:26px">17</div>
<div class="hd" style="left:8px;top:548px;width:26px">18</div>
<div class="hd" style="left:8px;top:568px;width:26px">19</div>
<div class="hd" style="left:8px;top:588px;width:26px">20</div>
<div class="a" style="left:34px;top:226px;width:549px;height:41px;background:#60497a"></div>
<div class="a" style="left:34px;top:266px;width:145px;height:141px;background:#92d050"></div>
<div class="a" style="left:710px;top:226px;width:96px;height:41px;background:#ffc000"></div>
<div class="a" style="left:179px;top:267px;width:403px;height:139px;background:#fff"></div>
<div class="a" style="left:178px;top:226px;width:1px;height:181px;background:#000"></div>
<div class="a" style="left:339px;top:226px;width:1px;height:181px;background:#000"></div>
<div class="a" style="left:518px;top:226px;width:1px;height:181px;background:#000"></div>
<div class="a" style="left:582px;top:266px;width:1px;height:141px;background:#000"></div>
<div class="a" style="left:34px;top:226px;width:485px;height:1px;background:#000"></div>
<div class="a" style="left:34px;top:266px;width:549px;height:1px;background:#000"></div>
<div class="a" style="left:34px;top:286px;width:549px;height:1px;background:#000"></div>
<div class="a" style="left:34px;top:306px;width:549px;height:1px;background:#000"></div>
<div class="a" style="left:34px;top:326px;width:549px;height:1px;background:#000"></div>
<div class="a" style="left:34px;top:346px;width:549px;height:1px;background:#000"></div>
<div class="a" style="left:34px;top:366px;width:549px;height:1px;background:#000"></div>
<div class="a" style="left:34px;top:386px;width:549px;height:1px;background:#000"></div>
<div class="a" style="left:34px;top:406px;width:549px;height:1px;background:#000"></div>
<div class="a" style="left:517px;top:385px;width:67px;height:23px;border:2px solid #000"></div>
<div class="a" style="left:580px;top:404px;width:6px;height:6px;background:#000;border:1px solid #fff;border-right:none;border-bottom:none"></div>
<div class="cell" style="left:711px;top:208px;width:94px;color:#000;padding-left:2px;"><span>Коэффициент</span></div>
<div class="cell" style="left:34px;top:248px;width:144px;color:#fff;text-align:center;font-weight:bold;"><span>Имя</span></div>
<div class="cell" style="left:179px;top:248px;width:160px;color:#fff;text-align:center;font-weight:bold;"><span>Дата</span></div>
<div class="cell b c" style="left:340px;top:228px;width:178px;color:#fff"><span style="transform:scaleX(0.9824);transform-origin:50% 50%;display:inline-block;">Сумма заработной платы,</span></div>
<div class="cell" style="left:340px;top:248px;width:178px;color:#fff;text-align:center;font-weight:bold;"><span>руб.</span></div>
<div class="cell b c" style="left:519px;top:228px;width:63px;color:#fff"><span>Премия,</span></div>
<div class="cell" style="left:519px;top:248px;width:63px;color:#fff;text-align:center;font-weight:bold;"><span>руб</span></div>
<div class="cell" style="left:711px;top:248px;width:94px;color:#000;text-align:right;padding-right:2px;"><span style="transform:scaleX(0.9544);transform-origin:100% 50%;display:inline-block;">0,280578366</span></div>
<div class="cell" style="left:34px;top:268px;width:144px;color:#000;padding-left:2px;"><span>Николаев А. Д.</span></div>
<div class="cell" style="left:179px;top:268px;width:160px;color:#000;text-align:center;"><span style="transform:scaleX(0.9695);transform-origin:50% 50%;display:inline-block;">25.05.2016</span></div>
<div class="cell" style="left:340px;top:268px;width:178px;color:#000;text-align:center;"><span style="transform:scaleX(0.9408);transform-origin:50% 50%;display:inline-block;">21556</span></div>
<div class="cell" style="left:519px;top:268px;width:63px;color:#000;text-align:center;"><span style="transform:scaleX(0.9670);transform-origin:50% 50%;display:inline-block;">6048,147</span></div>
<div class="cell" style="left:34px;top:288px;width:144px;color:#000;padding-left:2px;"><span>Сафронова В. М.</span></div>
<div class="cell" style="left:179px;top:288px;width:160px;color:#000;text-align:center;"><span style="transform:scaleX(0.9695);transform-origin:50% 50%;display:inline-block;">25.05.2016</span></div>
<div class="cell" style="left:340px;top:288px;width:178px;color:#000;text-align:center;"><span style="transform:scaleX(0.9408);transform-origin:50% 50%;display:inline-block;">18546</span></div>
<div class="cell" style="left:519px;top:288px;width:63px;color:#000;text-align:center;"><span style="transform:scaleX(0.9670);transform-origin:50% 50%;display:inline-block;">5203,606</span></div>
<div class="cell" style="left:34px;top:308px;width:144px;color:#000;padding-left:2px;"><span>Коваль Л. П.</span></div>
<div class="cell" style="left:179px;top:308px;width:160px;color:#000;text-align:center;"><span style="transform:scaleX(0.9695);transform-origin:50% 50%;display:inline-block;">25.05.2016</span></div>
<div class="cell" style="left:340px;top:308px;width:178px;color:#000;text-align:center;"><span style="transform:scaleX(0.9408);transform-origin:50% 50%;display:inline-block;">10546</span></div>
<div class="cell" style="left:519px;top:308px;width:63px;color:#000;text-align:center;"><span style="transform:scaleX(0.9670);transform-origin:50% 50%;display:inline-block;">2958,979</span></div>
<div class="cell" style="left:34px;top:328px;width:144px;color:#000;padding-left:2px;"><span>Парфенов Д. Ф.</span></div>
<div class="cell" style="left:179px;top:328px;width:160px;color:#000;text-align:center;"><span style="transform:scaleX(0.9695);transform-origin:50% 50%;display:inline-block;">25.05.2016</span></div>
<div class="cell" style="left:340px;top:328px;width:178px;color:#000;text-align:center;"><span style="transform:scaleX(0.9408);transform-origin:50% 50%;display:inline-block;">35254</span></div>
<div class="cell" style="left:519px;top:328px;width:63px;color:#000;text-align:center;"><span style="transform:scaleX(0.9649);transform-origin:50% 50%;display:inline-block;">9891,51</span></div>
<div class="cell" style="left:34px;top:348px;width:144px;color:#000;padding-left:2px;"><span>Петров Ф. Л.</span></div>
<div class="cell" style="left:179px;top:348px;width:160px;color:#000;text-align:center;"><span style="transform:scaleX(0.9695);transform-origin:50% 50%;display:inline-block;">25.05.2016</span></div>
<div class="cell" style="left:340px;top:348px;width:178px;color:#000;text-align:center;"><span style="transform:scaleX(0.9663);transform-origin:50% 50%;display:inline-block;">11456</span></div>
<div class="cell" style="left:519px;top:348px;width:63px;color:#000;text-align:center;"><span style="transform:scaleX(0.9670);transform-origin:50% 50%;display:inline-block;">3214,306</span></div>
<div class="cell" style="left:34px;top:368px;width:144px;color:#000;padding-left:2px;"><span>Попова М. Д.</span></div>
<div class="cell" style="left:179px;top:368px;width:160px;color:#000;text-align:center;"><span style="transform:scaleX(0.9695);transform-origin:50% 50%;display:inline-block;">25.05.2016</span></div>
<div class="cell" style="left:340px;top:368px;width:178px;color:#000;text-align:center;"><span style="transform:scaleX(0.9406);transform-origin:50% 50%;display:inline-block;">9564</span></div>
<div class="cell" style="left:519px;top:368px;width:63px;color:#000;text-align:center;"><span style="transform:scaleX(0.9670);transform-origin:50% 50%;display:inline-block;">2683,451</span></div>
<div class="cell" style="left:34px;top:388px;width:144px;color:#000;padding-left:2px;font-weight:bold;"><span>Среднее значение</span></div>
<div class="cell" style="left:519px;top:388px;width:63px;color:#000;text-align:center;font-weight:bold;"><span style="transform:scaleX(0.9201);transform-origin:50% 50%;display:inline-block;">5000</span></div>
<div class="a" style="left:845px;top:166px;width:16px;height:440px;background:linear-gradient(90deg,#e3e7ed,#f2f4f7 50%,#e6e9ee);border-left:1px solid #c5cad2"></div>
<div class="a" style="left:846px;top:167px;width:15px;height:8px;background:#f4f6f9;border:1px solid #8d95a3;border-radius:1px"></div>
<div class="a" style="left:850px;top:170px;width:8px;height:1px;background:#5a6272"></div>
<div class="a" style="left:849px;top:180px;width:0;height:0;border-left:4.500px solid transparent;border-right:4.500px solid transparent;border-bottom:5px solid #3d4350"></div>
<div class="a" style="left:846px;top:192px;width:14px;height:376px;border:1px solid #9aa1ae;border-radius:2px;background:linear-gradient(90deg,#fdfdfe,#eceff3 50%,#dfe3e9)"></div>
<div class="a" style="left:849px;top:376px;width:8px;height:1px;background:#7d8594"></div>
<div class="a" style="left:849px;top:378px;width:8px;height:1px;background:#7d8594"></div>
<div class="a" style="left:849px;top:380px;width:8px;height:1px;background:#7d8594"></div>
<div class="a" style="left:849px;top:382px;width:8px;height:1px;background:#7d8594"></div>
<div class="a" style="left:849px;top:594px;width:0;height:0;border-left:4.500px solid transparent;border-right:4.500px solid transparent;border-top:5px solid #3d4350"></div>
<div class="a" style="left:8px;top:606px;width:853px;height:15px;background:linear-gradient(180deg,#dfe3e9,#e9ecf1)"></div>
<div class="a" style="left:8px;top:605px;width:504px;height:1px;background:#9aa1ae"></div>
<div class="a" style="left:15.5px;top:607.7px;width:0;height:0;border-top:4px solid transparent;border-bottom:4px solid transparent;border-right:5px solid #3d4350"></div>
<div class="a" style="left:14px;top:607.700px;width:1.500px;height:8px;background:#3d4350"></div>
<div class="a" style="left:29.5px;top:607.7px;width:0;height:0;border-top:4px solid transparent;border-bottom:4px solid transparent;border-right:5px solid #3d4350"></div>
<div class="a" style="left:44.0px;top:607.7px;width:0;height:0;border-top:4px solid transparent;border-bottom:4px solid transparent;border-left:5px solid #3d4350"></div>
<div class="a" style="left:57.5px;top:607.7px;width:0;height:0;border-top:4px solid transparent;border-bottom:4px solid transparent;border-left:5px solid #3d4350"></div>
<div class="a" style="left:63.500px;top:607.700px;width:1.500px;height:8px;background:#3d4350"></div>
<svg style="left:0;top:604.500px" width="869" height="17" viewBox="0 0 869 17" shape-rendering="auto"><defs><linearGradient id="tg" x1="0" y1="0" x2="0" y2="1"><stop offset="0" stop-color="#f4f6f9"/><stop offset="1" stop-color="#dde1e8"/></linearGradient></defs><path d="M75 15.500L78 15.500L88 .500L151 .500L141 15.500z" fill="url(#tg)" stroke="#8f97a5" stroke-width="1"/><path d="M128 15.500L131 15.500L141 .500L205 .500L195 15.500z" fill="url(#tg)" stroke="#8f97a5" stroke-width="1"/><path d="M182 15.500L185 15.500L195 .500L267 .500L257 15.500z" fill="url(#tg)" stroke="#8f97a5" stroke-width="1"/><path d="M243.5 15.500L246.5 15.500L256.5 .500L326.5 .500L316.5 15.500z" fill="url(#tg)" stroke="#8f97a5" stroke-width="1"/><path d="M302.5 15.500L305.5 15.500L315.5 .500L412 .500L402 15.500z" fill="url(#tg)" stroke="#8f97a5" stroke-width="1"/><path d="M452 15.500L462 .500L509 .500L509 15.500z" fill="url(#tg)" stroke="#8f97a5"/><path d="M399 15.500L402.500 13 402.500 0 462 0 452 15.500z" fill="#fff" stroke="none"/><path d="M396 15.500h4l2.500-2.500V0M462 .500L452 15.500h-52" fill="none" stroke="#8f97a5"/></svg>
<div class="cell" style="transform:scaleX(0.9306);transform-origin:0 50%;left:91px;top:605px;line-height:18px;height:18px;color:#2c3140">Лист8</div>
<div class="cell" style="transform:scaleX(0.9306);transform-origin:0 50%;left:144.5px;top:605px;line-height:18px;height:18px;color:#2c3140">Лист9</div>
<div class="cell" style="transform:scaleX(0.9347);transform-origin:0 50%;left:197.5px;top:605px;line-height:18px;height:18px;color:#2c3140">Лист10</div>
<div class="cell" style="transform:scaleX(0.9446);transform-origin:0 50%;left:259px;top:605px;line-height:18px;height:18px;color:#2c3140">Лист11</div>
<div class="cell" style="transform:scaleX(0.8825);transform-origin:0 50%;left:323px;top:605px;line-height:18px;height:18px;color:#2c3140">Диаграмма1</div>
<div class="cell" style="transform:scaleX(0.9167);transform-origin:0 50%;left:466px;top:605px;line-height:18px;height:18px;color:#2c3140">Лист2</div>
<div class="cell b" style="transform:scaleX(0.9091);transform-origin:0 50%;left:412.500px;top:605px;line-height:18px;height:18px;color:#1a1d26">Лист1</div>
<div class="a" style="left:511px;top:606px;width:7px;height:15px;background:#f4f6f9;border:1px solid #8f97a5"></div>
<div class="a" style="left:514px;top:609px;width:1px;height:9px;background:#5a6272"></div>
<div class="a" style="left:518px;top:606px;width:327px;height:15px;background:linear-gradient(180deg,#e3e7ed,#f2f4f7 50%,#e6e9ee)"></div>
<div class="a" style="left:523.0px;top:609px;width:0;height:0;border-top:4px solid transparent;border-bottom:4px solid transparent;border-right:5px solid #3d4350"></div>
<div class="a" style="left:535px;top:606px;width:249px;height:15px;border:1px solid #9aa1ae;border-radius:2px;background:linear-gradient(180deg,#fdfdfe,#eceff3 50%,#dfe3e9)"></div>
<div class="a" style="left:656px;top:610px;width:1px;height:7px;background:#7d8594"></div>
<div class="a" style="left:658px;top:610px;width:1px;height:7px;background:#7d8594"></div>
<div class="a" style="left:660px;top:610px;width:1px;height:7px;background:#7d8594"></div>
<div class="a" style="left:662px;top:610px;width:1px;height:7px;background:#7d8594"></div>
<div class="a" style="left:826.5px;top:609px;width:0;height:0;border-top:4px solid transparent;border-bottom:4px solid transparent;border-left:5px solid #3d4350"></div>
<div class="a" style="left:838px;top:606px;width:7px;height:15px;background:#f4f6f9;border:1px solid #8f97a5"></div>
<div class="a" style="left:841px;top:609px;width:1px;height:9px;background:#5a6272"></div>
<div class="a" style="left:845px;top:606px;width:16px;height:15px;background:#e3e7ed"></div>
<div class="a" style="left:8px;top:620px;width:853px;height:23px;background:linear-gradient(180deg,#f2f3f6 0,#e3e5ea 2px,#d6d9df 45%,#c9cdd5 55%,#cdd1d8 100%);border-top:1px solid #8f959f"></div>
<div class="a" style="left:7px;top:643px;width:855px;height:1px;background:#6d7482"></div>
<div class="a" style="left:7px;top:52px;width:1px;height:592px;background:#9097a3"></div>
<div class="a" style="left:861px;top:52px;width:1px;height:592px;background:#9097a3"></div>
<div class="a" style="left:862px;top:30px;width:1px;height:615px;background:rgba(255,255,255,.8)"></div>
<div class="a" style="left:7px;top:644px;width:856px;height:1px;background:rgba(255,255,255,.8)"></div>
<div class="a" style="left:2px;top:8px;width:1px;height:636px;background:rgba(255,255,255,.7)"></div>
<div class="t" style="transform:scaleX(1.0277);transform-origin:0 50%;left:16px;top:623.700px;color:#2c3140">Готово</div>
<div class="a" style="left:62px;top:624px;width:2px;height:17px;background:linear-gradient(90deg,#9aa1ae 0 1px,#eef0f4 1px 2px)"></div>
<div class="a" style="left:97px;top:624px;width:2px;height:17px;background:linear-gradient(90deg,#9aa1ae 0 1px,#eef0f4 1px 2px)"></div>
<div class="a" style="left:604px;top:624px;width:2px;height:17px;background:linear-gradient(90deg,#9aa1ae 0 1px,#eef0f4 1px 2px)"></div>
<svg style="left:72px;top:625px" width="16" height="14" viewBox="0 0 16 14"><rect x="1.500" y="1.500" width="14" height="12" fill="#fff" stroke="#5b74a8"/><rect x="2" y="2" width="13" height="3" fill="#4a86d8"/><path d="M3.500 7.500h3M8.500 7.500h5M3.500 10.500h3M8.500 10.500h5" stroke="#7d8aa0" stroke-width="1.400"/><circle cx="2.500" cy="2.500" r="2.300" fill="#e05a3a"/></svg>
<div class="hl" style="left:609px;top:622px;width:19px;height:20px;border-radius:2px"></div>
<svg style="left:612px;top:626px" width="13" height="12" viewBox="0 0 13 12"><rect x=".500" y=".500" width="12" height="11" fill="#fff" stroke="#4a5262"/><path d="M.500 4.500h12M.500 8.500h12M4.500 .500v11M8.500 .500v11" stroke="#4a5262"/></svg>
<svg style="left:631px;top:626px" width="14" height="13" viewBox="0 0 14 13"><rect x=".500" y=".500" width="13" height="12" fill="#b8bec9" stroke="#4a5262"/><rect x="3.500" y="2.500" width="7" height="8" fill="#fff" stroke="#4a5262"/><path d="M5 5.500h4M5 7.500h4" stroke="#8d95a3"/></svg>
<svg style="left:649px;top:626px" width="14" height="13" viewBox="0 0 14 13"><rect x=".500" y=".500" width="13" height="12" fill="#fff" stroke="#4a5262"/><path d="M.500 7.500h13M5.500 .500v7" stroke="#4a5262"/><rect x="1" y="8" width="12" height="4" fill="#b8bec9"/></svg>
<div class="t" style="transform:scaleX(0.9347);transform-origin:0 50%;left:675px;top:623.700px;color:#2c3140">100%</div>
<div class="a" style="left:726px;top:632px;width:100px;height:1px;background:#7d8594"></div>
<div class="a" style="left:726px;top:633px;width:100px;height:1px;background:#eef0f4"></div>
<svg style="left:710px;top:624px" width="16" height="16" viewBox="0 0 16 16"><circle cx="8" cy="8" r="7.300" fill="#f4f6f9" stroke="#6d7482"/><rect x="4" y="7" width="8" height="2" fill="#3a3f4a"/></svg>
<svg style="left:825.5px;top:624px" width="16" height="16" viewBox="0 0 16 16"><circle cx="8" cy="8" r="7.300" fill="#f4f6f9" stroke="#6d7482"/><rect x="4" y="7" width="8" height="2" fill="#3a3f4a"/><rect x="7" y="4" width="2" height="8" fill="#3a3f4a"/></svg>
<svg style="left:772px;top:625px" width="10" height="14" viewBox="0 0 10 14"><path d="M.500 .500h8v8.500l-4 4-4-4z" fill="#f4f6f9" stroke="#6d7482"/></svg>
<div class="a" style="left:859px;top:631px;width:2px;height:2px;background:#9aa1ae"></div>
<div class="a" style="left:855px;top:635px;width:2px;height:2px;background:#9aa1ae"></div>
<div class="a" style="left:859px;top:635px;width:2px;height:2px;background:#9aa1ae"></div>
<div class="a" style="left:851px;top:639px;width:2px;height:2px;background:#9aa1ae"></div>
<div class="a" style="left:855px;top:639px;width:2px;height:2px;background:#9aa1ae"></div>
<div class="a" style="left:859px;top:639px;width:2px;height:2px;background:#9aa1ae"></div>
<svg style="left:0;top:0" width="869" height="651" viewBox="0 0 869 651"><rect x="260.300" y="143.800" width="111" height="31" rx="8" fill="none" stroke="#e61e25" stroke-width="4.500"/><rect x="514.500" y="387.500" width="76" height="26" rx="7" fill="none" stroke="#e61e25" stroke-width="5"/></svg>
</div></body></html>
